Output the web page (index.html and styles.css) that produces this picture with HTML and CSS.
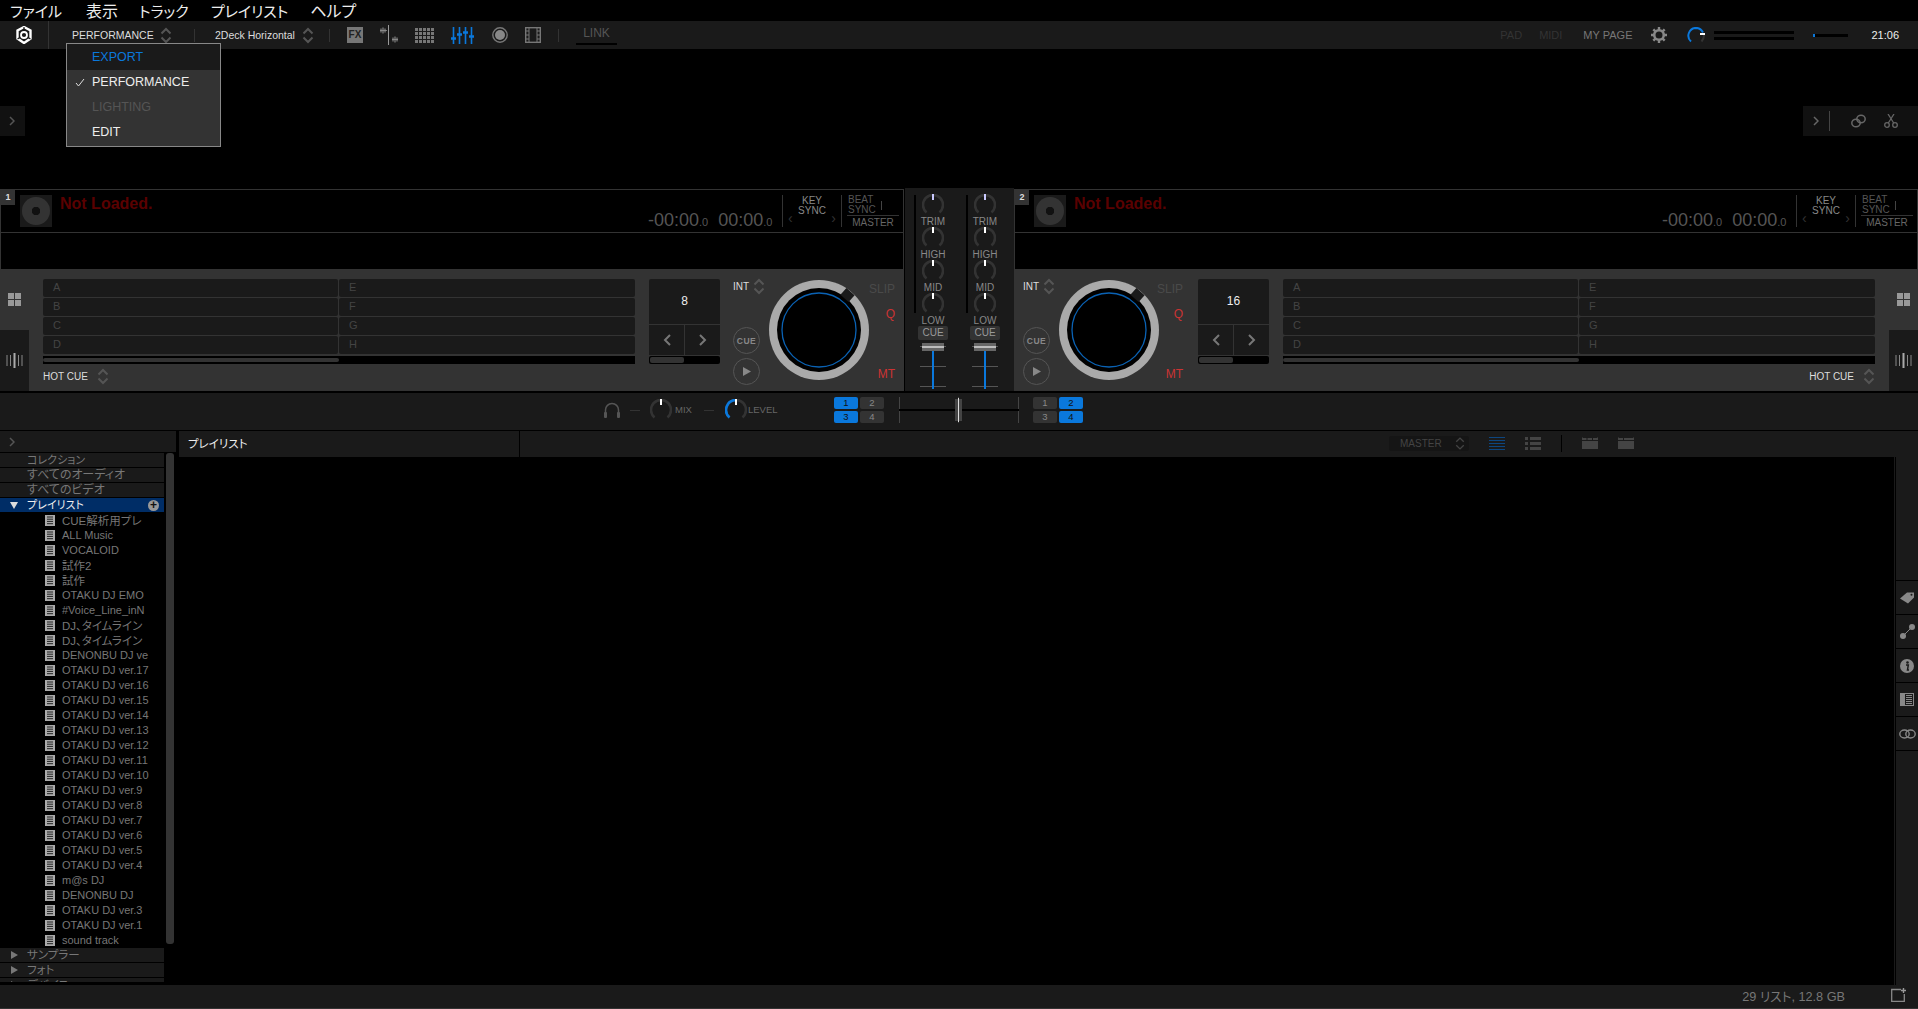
FILE: index.html
```html
<!DOCTYPE html>
<html lang="ja">
<head>
<meta charset="utf-8">
<title>rekordbox</title>
<link rel="stylesheet" href="styles.css">
</head>
<body>
<svg class="defs" width="0" height="0">
  <symbol id="updown" viewBox="0 0 12 17"><path d="M1.5 6.5 6 2l4.500 4.500M1.500 10.500 6 15l4.500-4.500" fill="none" stroke="#555" stroke-width="2"/></symbol>
  <symbol id="knob" viewBox="0 0 22 22"><path d="M4.500 18.500A10 10 0 1 1 17.500 18.500" fill="none" stroke="#333" stroke-width="2.600"/><rect x="10" y="0" width="2" height="6" fill="#fff"/></symbol>
  <symbol id="trim" viewBox="0 0 22 22"><path d="M4.500 18.500A10 10 0 1 1 17.500 18.500" fill="none" stroke="#333" stroke-width="2.600"/><rect x="10" y="0" width="2" height="6" fill="#c9c9ff"/></symbol>
  <symbol id="jog" viewBox="0 0 100 100">
    <circle cx="50" cy="50" r="50" fill="#aaa"/><circle cx="50" cy="50" r="42" fill="#000"/><circle cx="50" cy="50" r="37" fill="none" stroke="#0a62b4" stroke-width="1.300"/>
    <rect x="73" y="10.500" width="11" height="9" fill="#1a1a1a" transform="rotate(42 78.500 15)"/>
  </symbol>
  <symbol id="fader" viewBox="0 0 30 48">
    <rect x="2" y="3" width="26" height="1" fill="#555"/><rect x="2" y="23" width="26" height="1" fill="#555"/><rect x="2" y="43" width="26" height="1" fill="#555"/>
    <rect x="14" y="6" width="2" height="40" fill="#0a78dc"/>
    <rect x="4" y="0" width="22" height="8" fill="#666"/><rect x="4" y="3" width="22" height="2" fill="#bbb"/>
  </symbol>
  <symbol id="plist" viewBox="0 0 10 11"><rect width="10" height="11" fill="#aaa"/><path d="M2 2h6M2 4.200h6M2 6.400h6M2 8.700h6" stroke="#222" stroke-width="1"/></symbol>
  <symbol id="grid4" viewBox="0 0 13 13"><path d="M0 0h6v6H0zM7 0h6v6H7zM0 7h6v6H0zM7 7h6v6H7z" fill="#999"/></symbol>
  <symbol id="wavetab" viewBox="0 0 17 15"><path d="M1 2v11M4.500 2v11M12.500 2v11M16 2v11" stroke="#888" stroke-width="1"/><path d="M8.500 0v15" stroke="#aaa" stroke-width="2"/></symbol>
</svg>

<nav class="menubar">
  <span class="menu-item">ファイル</span><span class="menu-item menu-kanji">表示</span><span class="menu-item">トラック</span><span class="menu-item">プレイリスト</span><span class="menu-item menu-kanji">ヘルプ</span>
</nav>

<header class="toolbar">
  <div class="logo-cell">
    <svg width="16" height="18" viewBox="0 0 16 18"><path d="M8 1 14.500 4.500v8L8 17 1.500 12.500v-8z" fill="none" stroke="#fff" stroke-width="2.400"/><circle cx="8" cy="9" r="3" fill="none" stroke="#fff" stroke-width="1.800"/><path d="M8 1v3M1.500 13l2.500-1.500M14.500 13 12 11.500" stroke="#1a1a1a" stroke-width="1.200"/></svg>
  </div>
  <span class="tb-label tb-mode">PERFORMANCE</span>
  <svg class="tb-chev tb-chev-a" width="12" height="17"><use href="#updown"/></svg>
  <i class="tb-sep tb-sep-a"></i>
  <span class="tb-label tb-layout">2Deck Horizontal</span>
  <svg class="tb-chev tb-chev-b" width="12" height="17"><use href="#updown"/></svg>
  <i class="tb-sep tb-sep-b"></i>
  <span class="fx-icon">FX</span>
  <svg class="ic-wave" width="19" height="20" viewBox="0 0 19 20"><path d="M9.500 0v20" stroke="#999"/><path d="M1 5.500h7M13 14.500h6" stroke="#777"/><path d="M2 3.500v4M4 2.500v6M6 3.500v4M14 12.500v4M16 11.500v6M18 12.500v4" stroke="#999"/></svg>
  <svg class="ic-pads" width="19" height="15" viewBox="0 0 19 15"><path d="M0 0h3v3H0zM4 0h3v3H4zM8 0h3v3H8zM12 0h3v3h-3zM16 0h3v3h-3zM0 4h3v3H0zM4 4h3v3H4zM8 4h3v3H8zM12 4h3v3h-3zM16 4h3v3h-3zM0 8h3v3H0zM4 8h3v3H4zM8 8h3v3H8zM12 8h3v3h-3zM16 8h3v3h-3zM0 12h3v3H0zM4 12h3v3H4zM8 12h3v3H8zM12 12h3v3h-3zM16 12h3v3h-3z" fill="#777"/></svg>
  <svg class="ic-mix" width="23" height="17" viewBox="0 0 23 17"><g stroke="#0a78dc"><path d="M2.500 0v17M8.500 0v17M14.500 0v17M20.500 0v17" stroke-width="1.600"/><path d="M0 11.500h5M6 7.500h5M12 5.500h5M18 9.500h5" stroke-width="2.400"/></g></svg>
  <svg class="ic-rec" width="16" height="16" viewBox="0 0 16 16"><circle cx="8" cy="8" r="7.200" fill="none" stroke="#777" stroke-width="1.400"/><circle cx="8" cy="8" r="5" fill="#888"/></svg>
  <svg class="ic-film" width="16" height="16" viewBox="0 0 16 16"><rect x=".7" y=".7" width="14.600" height="14.600" fill="none" stroke="#777" stroke-width="1.400"/><path d="M4 0v16M12 0v16M0 4h4M0 8h4M0 12h4M12 4h4M12 8h4M12 12h4" stroke="#777"/></svg>
  <i class="tb-sep tb-sep-c"></i>
  <span class="tb-link">LINK</span>
  <div class="tb-right">
    <span class="tb-dim tb-pad">PAD</span>
    <span class="tb-dim tb-midi">MIDI</span>
    <span class="tb-mypage">MY PAGE</span>
    <svg class="ic-gear" width="16" height="16" viewBox="0 0 16 16"><circle cx="8" cy="8" r="4.800" fill="none" stroke="#888" stroke-width="2.600"/><path d="M8 0v3M8 13v3M0 8h3M13 8h3M2.300 2.300l2.100 2.100M11.600 11.600l2.100 2.100M13.700 2.300l-2.100 2.100M4.400 11.600l-2.100 2.100" stroke="#888" stroke-width="2.400"/></svg>
    <svg class="ic-vol" width="18" height="16" viewBox="0 0 18 16"><path d="M4 14.500A7.800 7.800 0 0 1 9 .9c3 0 5.500 1.800 7 4.600" fill="none" stroke="#0a78dc" stroke-width="2"/><path d="M17 8c0 2.500-.8 4.500-2.500 6.500" fill="none" stroke="#333" stroke-width="2"/><rect x="13" y="6" width="5" height="2" fill="#fff"/></svg>
    <div class="meter"><i></i><i></i></div>
    <div class="cpu"><i></i></div>
    <span class="clock">21:06</span>
  </div>
</header>

<ul class="mode-menu">
  <li class="mm-row mm-active">EXPORT</li>
  <li class="mm-row mm-checked"><svg class="mm-check" width="10" height="9" viewBox="0 0 10 9"><path d="M1 5l2.500 3L9 1" fill="none" stroke="#ddd" stroke-width="1"/></svg>PERFORMANCE</li>
  <li class="mm-row mm-off">LIGHTING</li>
  <li class="mm-row">EDIT</li>
</ul>

<section class="topzone">
  <div class="side-tab"><svg width="6" height="10" viewBox="0 0 6 10"><path d="M1 1l4 4-4 4" fill="none" stroke="#555" stroke-width="1.500"/></svg></div>
  <div class="side-tools">
    <svg width="6" height="10" viewBox="0 0 6 10"><path d="M1 1l4 4-4 4" fill="none" stroke="#666" stroke-width="1.500"/></svg>
    <i class="st-sep"></i>
    <svg class="st-link" width="15" height="14" viewBox="0 0 15 14"><g fill="none" stroke="#666" stroke-width="1.500"><ellipse cx="5" cy="9" rx="4.200" ry="3.800"/><ellipse cx="10" cy="5" rx="4.200" ry="3.800"/></g></svg>
    <svg class="st-cut" width="14" height="14" viewBox="0 0 14 14"><g fill="none" stroke="#666" stroke-width="1.300"><circle cx="3" cy="11" r="2.300"/><circle cx="11" cy="11" r="2.300"/><path d="M4.300 9 10 0M9.700 9 4 0"/></g></svg>
  </div>
</section>

<main class="decks">
  <section class="deck">
    <div class="info">
      <span class="badge">1</span>
      <span class="jacket"><i></i></span>
      <span class="title">Not Loaded.</span>
      <span class="times"><b>-00:00<small>.0</small></b><b>00:00<small>.0</small></b></span>
      <div class="keysync"><span class="chev-l">‹</span><span class="key-text">KEY<br>SYNC</span><span class="chev-r">›</span></div>
      <div class="beatsync"><div class="bs-top"><span>BEAT<br>SYNC</span><i></i></div><div class="bs-master">MASTER</div></div>
    </div>
    <div class="wave"></div>
    <div class="panel">
      <div class="tabs"><div class="tab-a"><svg width="13" height="13"><use href="#grid4"/></svg></div><div class="tab-b"><svg width="17" height="15"><use href="#wavetab"/></svg></div></div>
      <div class="pads-col">
        <div class="pads"><span>A</span><span>E</span><span>B</span><span>F</span><span>C</span><span>G</span><span>D</span><span>H</span></div>
        <div class="pad-scroll"><i></i></div>
        <div class="pad-mode"><span>HOT CUE</span><svg width="12" height="17"><use href="#updown"/></svg></div>
      </div>
      <div class="loop">
        <div class="loop-num">8</div>
        <div class="loop-arrows"><span><svg width="8" height="12" viewBox="0 0 8 12"><path d="M7 1 2 6l5 5" fill="none" stroke="#777" stroke-width="2"/></svg></span><span><svg width="8" height="12" viewBox="0 0 8 12"><path d="M1 1l5 5-5 5" fill="none" stroke="#777" stroke-width="2"/></svg></span></div>
        <div class="loop-scroll"><i></i></div>
      </div>
      <div class="transport">
        <div class="int"><span>INT</span><svg width="12" height="17"><use href="#updown"/></svg></div>
        <div class="round cue">CUE</div>
        <div class="round play"><svg width="8" height="9" viewBox="0 0 8 9"><path d="M0 0l8 4.500L0 9z" fill="#888"/></svg></div>
      </div>
      <svg class="jog" width="100" height="100"><use href="#jog"/></svg>
      <div class="flags"><span class="slip">SLIP</span><span class="q">Q</span><span class="mt">MT</span></div>
    </div>
  </section>

  <section class="mixer">
    <div class="channel">
      <i class="ch-meter"></i>
      <div class="ch-col">
        <svg width="22" height="22"><use href="#trim"/></svg><span>TRIM</span>
        <svg width="22" height="22"><use href="#knob"/></svg><span>HIGH</span>
        <svg width="22" height="22"><use href="#knob"/></svg><span>MID</span>
        <svg width="22" height="22"><use href="#knob"/></svg><span>LOW</span>
        <div class="ch-cue">CUE</div>
        <svg class="ch-fader" width="30" height="48"><use href="#fader"/></svg>
      </div>
    </div>
    <div class="channel">
      <i class="ch-meter"></i>
      <div class="ch-col">
        <svg width="22" height="22"><use href="#trim"/></svg><span>TRIM</span>
        <svg width="22" height="22"><use href="#knob"/></svg><span>HIGH</span>
        <svg width="22" height="22"><use href="#knob"/></svg><span>MID</span>
        <svg width="22" height="22"><use href="#knob"/></svg><span>LOW</span>
        <div class="ch-cue">CUE</div>
        <svg class="ch-fader" width="30" height="48"><use href="#fader"/></svg>
      </div>
    </div>
  </section>

  <section class="deck">
    <div class="info">
      <span class="badge">2</span>
      <span class="jacket"><i></i></span>
      <span class="title">Not Loaded.</span>
      <span class="times"><b>-00:00<small>.0</small></b><b>00:00<small>.0</small></b></span>
      <div class="keysync"><span class="chev-l">‹</span><span class="key-text">KEY<br>SYNC</span><span class="chev-r">›</span></div>
      <div class="beatsync"><div class="bs-top"><span>BEAT<br>SYNC</span><i></i></div><div class="bs-master">MASTER</div></div>
    </div>
    <div class="wave"></div>
    <div class="panel panel-r">
      <div class="transport">
        <div class="int"><span>INT</span><svg width="12" height="17"><use href="#updown"/></svg></div>
        <div class="round cue">CUE</div>
        <div class="round play"><svg width="8" height="9" viewBox="0 0 8 9"><path d="M0 0l8 4.500L0 9z" fill="#888"/></svg></div>
      </div>
      <svg class="jog" width="100" height="100"><use href="#jog"/></svg>
      <div class="flags"><span class="slip">SLIP</span><span class="q">Q</span><span class="mt">MT</span></div>
      <div class="loop">
        <div class="loop-num">16</div>
        <div class="loop-arrows"><span><svg width="8" height="12" viewBox="0 0 8 12"><path d="M7 1 2 6l5 5" fill="none" stroke="#777" stroke-width="2"/></svg></span><span><svg width="8" height="12" viewBox="0 0 8 12"><path d="M1 1l5 5-5 5" fill="none" stroke="#777" stroke-width="2"/></svg></span></div>
        <div class="loop-scroll"><i></i></div>
      </div>
      <div class="pads-col">
        <div class="pads"><span>A</span><span>E</span><span>B</span><span>F</span><span>C</span><span>G</span><span>D</span><span>H</span></div>
        <div class="pad-scroll"><i></i></div>
        <div class="pad-mode pad-mode-r"><span>HOT CUE</span><svg width="12" height="17"><use href="#updown"/></svg></div>
      </div>
      <div class="tabs"><div class="tab-a"><svg width="13" height="13"><use href="#grid4"/></svg></div><div class="tab-b"><svg width="17" height="15"><use href="#wavetab"/></svg></div></div>
    </div>
  </section>
</main>

<section class="strip">
  <svg class="phones" width="18" height="16" viewBox="0 0 18 16"><path d="M2.500 15V8a6.500 6.500 0 0 1 13 0v7" fill="none" stroke="#555" stroke-width="1.500"/><rect x="1" y="10" width="3" height="6" rx="1" fill="#555"/><rect x="14" y="10" width="3" height="6" rx="1" fill="#555"/></svg>
  <i class="dash dash-a"></i>
  <svg class="knob-mix" width="22" height="22"><use href="#knob"/></svg>
  <span class="strip-label lb-mix">MIX</span>
  <i class="dash dash-b"></i>
  <svg class="knob-level" width="22" height="22" viewBox="0 0 22 22"><path d="M4.500 18.500A10 10 0 1 1 17.500 18.500" fill="none" stroke="#333" stroke-width="2.600"/><path d="M4.500 18.500A10 10 0 0 1 11 1" fill="none" stroke="#0a78dc" stroke-width="2.600"/><rect x="10" y="0" width="2" height="6" fill="#fff"/></svg>
  <span class="strip-label lb-level">LEVEL</span>
  <div class="fxgrid fxgrid-l"><span class="on">1</span><span>2</span><span class="on">3</span><span>4</span></div>
  <svg class="xfader" width="120" height="26" viewBox="0 0 120 26"><path d="M.5 0v26M59.500 0v26M119.500 0v26" stroke="#444"/><rect y="12" width="120" height="2" fill="#000"/><rect x="56" y="2" width="7" height="22" fill="#444"/><rect x="59" y="1" width="1" height="24" fill="#ddd"/></svg>
  <div class="fxgrid fxgrid-r"><span>1</span><span class="on">2</span><span>3</span><span class="on">4</span></div>
</section>

<section class="browser">
  <aside class="sidebar">
    <div class="side-head"><svg width="6" height="10" viewBox="0 0 6 10"><path d="M1 1l4 4-4 4" fill="none" stroke="#555" stroke-width="1.500"/></svg></div>
    <div class="tree">
      <div class="node">コレクション</div>
      <div class="node node-kana">すべてのオーディオ</div>
      <div class="node node-kana">すべてのビデオ</div>
      <div class="node node-sel"><i class="tri-d"></i>プレイリスト<span class="plus">+</span></div>
      <div class="item item-jp"><svg width="10" height="11"><use href="#plist"/></svg>CUE解析用プレ</div>
      <div class="item"><svg width="10" height="11"><use href="#plist"/></svg>ALL Music</div>
      <div class="item"><svg width="10" height="11"><use href="#plist"/></svg>VOCALOID</div>
      <div class="item item-jp"><svg width="10" height="11"><use href="#plist"/></svg>試作2</div>
      <div class="item item-jp"><svg width="10" height="11"><use href="#plist"/></svg>試作</div>
      <div class="item"><svg width="10" height="11"><use href="#plist"/></svg>OTAKU DJ EMO</div>
      <div class="item"><svg width="10" height="11"><use href="#plist"/></svg>#Voice_Line_inN</div>
      <div class="item item-jp"><svg width="10" height="11"><use href="#plist"/></svg>DJ、タイムライン</div>
      <div class="item item-jp"><svg width="10" height="11"><use href="#plist"/></svg>DJ、タイムライン</div>
      <div class="item"><svg width="10" height="11"><use href="#plist"/></svg>DENONBU DJ ve</div>
      <div class="item"><svg width="10" height="11"><use href="#plist"/></svg>OTAKU DJ ver.17</div>
      <div class="item"><svg width="10" height="11"><use href="#plist"/></svg>OTAKU DJ ver.16</div>
      <div class="item"><svg width="10" height="11"><use href="#plist"/></svg>OTAKU DJ ver.15</div>
      <div class="item"><svg width="10" height="11"><use href="#plist"/></svg>OTAKU DJ ver.14</div>
      <div class="item"><svg width="10" height="11"><use href="#plist"/></svg>OTAKU DJ ver.13</div>
      <div class="item"><svg width="10" height="11"><use href="#plist"/></svg>OTAKU DJ ver.12</div>
      <div class="item"><svg width="10" height="11"><use href="#plist"/></svg>OTAKU DJ ver.11</div>
      <div class="item"><svg width="10" height="11"><use href="#plist"/></svg>OTAKU DJ ver.10</div>
      <div class="item"><svg width="10" height="11"><use href="#plist"/></svg>OTAKU DJ ver.9</div>
      <div class="item"><svg width="10" height="11"><use href="#plist"/></svg>OTAKU DJ ver.8</div>
      <div class="item"><svg width="10" height="11"><use href="#plist"/></svg>OTAKU DJ ver.7</div>
      <div class="item"><svg width="10" height="11"><use href="#plist"/></svg>OTAKU DJ ver.6</div>
      <div class="item"><svg width="10" height="11"><use href="#plist"/></svg>OTAKU DJ ver.5</div>
      <div class="item"><svg width="10" height="11"><use href="#plist"/></svg>OTAKU DJ ver.4</div>
      <div class="item"><svg width="10" height="11"><use href="#plist"/></svg>m@s DJ</div>
      <div class="item"><svg width="10" height="11"><use href="#plist"/></svg>DENONBU DJ</div>
      <div class="item"><svg width="10" height="11"><use href="#plist"/></svg>OTAKU DJ ver.3</div>
      <div class="item"><svg width="10" height="11"><use href="#plist"/></svg>OTAKU DJ ver.1</div>
      <div class="item"><svg width="10" height="11"><use href="#plist"/></svg>sound track</div>
      <div class="node node-kana2"><i class="tri-r"></i>サンプラー</div>
      <div class="node node-kana2"><i class="tri-r"></i>フォト</div>
      <div class="node node-kana2"><i class="tri-r"></i>デバイス</div>
      <i class="tree-scroll"></i>
    </div>
  </aside>
  <div class="content">
    <div class="list-head">
      <div class="list-title">プレイリスト</div>
      <div class="master-box"><span>MASTER</span><svg width="10" height="15" viewBox="0 0 12 17"><path d="M1.500 6.500 6 2l4.500 4.500M1.500 10.500 6 15l4.500-4.500" fill="none" stroke="#444" stroke-width="1.600"/></svg></div>
      <svg class="lh-a" width="16" height="13" viewBox="0 0 16 13"><path d="M0 .5h16M0 3.500h16M0 6.500h16M0 9.500h16M0 12.500h16" stroke="#0d4680"/></svg>
      <svg class="lh-b" width="16" height="13" viewBox="0 0 16 13"><path d="M0 0h3v3H0zM5 0h11v3H5zM0 5h3v3H0zM5 5h11v3H5zM0 10h3v3H0zM5 10h11v3H5z" fill="#444"/></svg>
      <i class="lh-sep"></i>
      <svg class="lh-c" width="16" height="12" viewBox="0 0 16 12"><rect width="16" height="12" fill="#444"/><path d="M.5 .5h15M5 .5v3M10.500 .5v3M0 3.500h16" stroke="#1a1a1a"/></svg>
      <svg class="lh-d" width="16" height="12" viewBox="0 0 16 12"><rect width="16" height="12" fill="#444"/><path d="M.5 .5h15M5.500 .5v3M0 3.500h16" stroke="#1a1a1a"/></svg>
    </div>
    <div class="list-body">
      <div class="list-empty"></div>
      <div class="rail">
        <div class="rail-top"></div>
        <div class="rail-cell"><svg width="14" height="12" viewBox="0 0 14 12"><path d="M0 6.500 7 .5h7v5l-6 6z" fill="#888"/><circle cx="11.500" cy="2.800" r="1" fill="#1a1a1a"/></svg></div>
        <div class="rail-cell"><svg width="15" height="15" viewBox="0 0 15 15"><circle cx="3" cy="12" r="3" fill="#888"/><circle cx="12" cy="3" r="3" fill="#888"/><path d="M3 12 12 3" stroke="#888"/></svg></div>
        <div class="rail-cell"><svg width="14" height="14" viewBox="0 0 14 14"><circle cx="7" cy="7" r="7" fill="#888"/><circle cx="7.500" cy="3.500" r="1.300" fill="#1a1a1a"/><path d="M6 6h2.300l-.8 5H9" fill="none" stroke="#1a1a1a" stroke-width="1.500"/></svg></div>
        <div class="rail-cell"><svg width="14" height="13" viewBox="0 0 14 13"><rect width="14" height="13" fill="#888"/><rect x="5" y="1" width="8" height="11" fill="#1a1a1a"/><path d="M6 2.500h6M6 4.500h6M6 6.500h6M6 8.500h6M6 10.500h6" stroke="#888"/></svg></div>
        <div class="rail-cell"><svg width="17" height="10" viewBox="0 0 17 10"><g fill="none" stroke="#888" stroke-width="1.400"><ellipse cx="5.500" cy="5" rx="4.700" ry="4"/><ellipse cx="11.500" cy="5" rx="4.700" ry="4"/></g></svg></div>
        <div class="rail-end"></div>
      </div>
    </div>
  </div>
</section>

<footer class="status">
  <span class="status-text">29 リスト, 12.8 GB</span>
  <svg width="15" height="14" viewBox="0 0 15 14"><path d="M10 1.500H.7v11.800h12.600V6" fill="none" stroke="#888" stroke-width="1.300"/><path d="M12.500 0v5M10 2.500h5" stroke="#999" stroke-width="1.400"/></svg>
</footer>
</body>
</html>
```

FILE: styles.css
```css
* { box-sizing: border-box; }
html, body { margin: 0; padding: 0; }
body {
  width: 1918px; height: 1009px; overflow: hidden; background: #000; color: #888;
  font-family: "Liberation Sans", "Noto Sans CJK JP", sans-serif; font-size: 11px; position: relative;
  font-feature-settings: "palt";
}
i { display: block; font-style: normal; }
svg { display: block; flex: none; }
.defs { position: absolute; }

/* menu */
.menubar { height: 21px; display: flex; align-items: center; padding-left: 10px; color: #eee; font-size: 15px; font-family: "Noto Sans CJK JP", sans-serif; line-height: 21px; }
.menu-item { margin-right: 22px; }
.menu-item:first-child { margin-right: 24px; }
.menu-kanji { font-size: 16px; margin-right: 21px; }

/* toolbar */
.toolbar { height: 28px; background: #1a1a1a; display: flex; align-items: center; font-size: 10.5px; }
.logo-cell { width: 49px; height: 28px; border-right: 1px solid #333; display: flex; align-items: center; justify-content: center; }
.tb-label { color: #ddd; white-space: nowrap; }
.tb-mode { margin-left: 23px; width: 81px; }
.tb-chev-a { margin-left: 7px; }
.tb-sep { width: 1px; height: 13px; background: #333; }
.tb-sep-a { margin-left: 22px; }
.tb-layout { margin-left: 20px; width: 79px; }
.tb-chev-b { margin-left: 8px; }
.tb-sep-b { margin-left: 15px; }
.fx-icon { margin-left: 17px; width: 16px; height: 16px; background: #777; color: #222; font-weight: bold; font-size: 10px; line-height: 16px; text-align: center; }
.ic-wave { margin-left: 16px; }
.ic-pads { margin-left: 17px; }
.ic-mix { margin-left: 17px; }
.ic-rec { margin-left: 18px; }
.ic-film { margin-left: 17px; }
.tb-sep-c { margin-left: 17px; }
.tb-link { margin-left: 17px; width: 41px; height: 20px; line-height: 16px; font-size: 12px; text-align: center; color: #555; border-bottom: 2px solid #000; margin-top: 0; }
.tb-right { margin-left: auto; display: flex; align-items: center; }
.tb-dim { color: #333; }
.tb-pad { font-size: 11px; }
.tb-midi { font-size: 11px; margin-left: 17px; }
.tb-mypage { margin-left: 21px; color: #777; font-size: 11px; }
.ic-gear { margin-left: 19px; }
.ic-vol { margin-left: 20px; }
.meter { margin-left: 9px; width: 80px; }
.meter i { height: 3px; background: #000; }
.meter i + i { margin-top: 3px; }
.cpu { margin-left: 19px; width: 35px; height: 3px; background: #000; }
.cpu i { width: 2px; height: 3px; background: #0a78dc; }
.clock { margin-left: 23px; margin-right: 19px; color: #eee; font-size: 11px; }

/* mode dropdown */
.mode-menu { position: absolute; left: 66px; top: 43px; width: 155px; height: 104px; margin: 0; padding: 0; list-style: none; background: #333; border: 1px solid #888; font-size: 12.500px; }
.mm-row { height: 25px; line-height: 25px; padding-left: 25px; color: #eee; position: relative; }
.mm-active { height: 26px; line-height: 27px; background: #1a1a1a; color: #0a78dc; }
.mm-checked { line-height: 24px; }
.mm-off { color: #555; }
.mm-check { position: absolute; left: 8px; top: 8px; }

/* top zone */
.topzone { height: 140px; padding-top: 57px; display: flex; justify-content: space-between; align-items: flex-start; }
.side-tab { width: 25px; height: 30px; background: #111; display: flex; align-items: center; padding-left: 9px; }
.side-tools { width: 115px; height: 30px; background: #111; display: flex; align-items: center; padding-left: 10px; }
.st-sep { width: 1px; height: 20px; background: #444; margin-left: 10px; }
.st-link { margin-left: 21px; }
.st-cut { margin-left: 18px; }

/* decks */
.decks { display: flex; height: 202px; }
.deck { width: 904px; flex: none; }
.info { height: 44px; border: 1px solid #333; display: flex; align-items: flex-start; }
.badge { width: 14px; height: 15px; background: #333; color: #ddd; font-weight: bold; font-size: 9px; line-height: 15px; text-align: center; }
.jacket { width: 32px; height: 32px; margin: 5px 0 0 5px; background: #1a1a1a; display: flex; align-items: center; justify-content: center; }
.jacket i { width: 28px; height: 28px; border-radius: 50%; background: radial-gradient(circle, #111 0 4px, #333 4.500px); }
.title { margin: 3px 0 0 8px; color: #5a0000; font-weight: bold; font-size: 16px; line-height: 22px; width: 588px; white-space: nowrap; }
.times { width: 134px; margin-top: 19px; display: flex; gap: 10px; color: #555; font-size: 18px; line-height: 22px; }
.times b { font-weight: normal; }
.times small { font-size: 11px; }
.keysync { width: 60px; height: 32px; margin-top: 5px; border-left: 1px solid #333; border-right: 1px solid #333; position: relative; text-align: center; font-size: 10px; line-height: 10px; color: #888; }
.key-text { display: block; padding-top: 1px; }
.chev-l, .chev-r { position: absolute; top: 18px; color: #333; font-size: 14px; }
.chev-l { left: 5px; }
.chev-r { right: 5px; }
.beatsync { width: 52px; margin: 5px 0 0 5px; font-size: 10px; line-height: 10px; color: #555; }
.bs-top { display: flex; align-items: center; height: 21px; padding-left: 1px; border-bottom: 1px solid #333; }
.bs-top i { width: 1px; height: 9px; background: #444; margin-left: 5px; }
.bs-master { text-align: center; padding-top: 2px; color: #666; }
.wave { height: 36px; border-left: 1px solid #333; border-right: 1px solid #333; }

.panel { height: 122px; background: #333; display: flex; align-items: flex-start; }
.tabs { width: 29px; height: 122px; flex: none; }
.panel-r .tabs { margin-left: 14px; }
.tab-a { height: 61px; display: flex; align-items: center; justify-content: center; }
.tab-b { height: 61px; background: #1a1a1a; display: flex; align-items: center; justify-content: center; padding-bottom: 1px; }
.pads-col { width: 592px; margin: 10px 0 0 14px; flex: none; }
.pads { display: grid; grid-template-columns: 295px 296px; grid-auto-rows: 18px; gap: 1px; }
.pads span { background: #1a1a1a; border-radius: 2px; color: #444; font-size: 11px; line-height: 17px; padding-left: 10px; }
.pad-scroll { height: 8px; background: #000; margin-top: 2px; padding-top: 2px; }
.pad-scroll i { width: 296px; height: 4px; background: #333; border-radius: 2px; }
.pad-mode { display: flex; align-items: center; height: 17px; margin-top: 4px; color: #ddd; font-size: 10px; }
.pad-mode svg { margin-left: 9px; }
.pad-mode-r { justify-content: flex-end; }
.loop { width: 71px; margin: 10px 0 0 14px; flex: none; }
.panel-r .loop { margin-left: 15px; }
.loop-num { height: 45px; background: #1a1a1a; border-radius: 2px 2px 0 0; color: #eee; font-size: 12px; line-height: 45px; text-align: center; }
.loop-arrows { height: 30px; margin-top: 1px; display: grid; grid-template-columns: 35px 35px; gap: 1px; }
.loop-arrows span { background: #1a1a1a; display: flex; align-items: center; justify-content: center; }
.loop-scroll { height: 8px; margin-top: 1px; background: #000; border-radius: 2px; padding: 1px; }
.loop-scroll i { width: 34px; height: 6px; background: #333; border-radius: 2px; }
.transport { width: 27px; margin: 10px 0 0 13px; flex: none; }
.int { display: flex; align-items: center; height: 17px; color: #ddd; font-size: 10px; white-space: nowrap; margin-top: -1px; }
.int svg { margin-left: 4px; }
.round { width: 27px; height: 27px; border: 1px solid #555; border-radius: 50%; display: flex; align-items: center; justify-content: center; }
.cue { margin-top: 32px; color: #888; font-weight: bold; font-size: 8.500px; letter-spacing: .5px; }
.play { margin-top: 4px; }
.jog { margin: 11px 0 0 9px; }
.flags { width: 26px; flex: none; display: flex; flex-direction: column; align-items: flex-end; margin-top: 13px; font-size: 12px; line-height: 14px; color: #c33; }
.slip { color: #4a4a4a; white-space: nowrap; }
.q { margin-top: 11px; }
.mt { margin-top: 46px; }
.panel-r .transport { margin-left: 9px; }
.panel-r .flags { width: 24px; }

/* mixer */
.mixer { width: 109px; flex: none; margin: -1px 0 0 1px; height: 203px; background: #1a1a1a; display: flex; padding-left: 2px; }
.channel { width: 52px; display: flex; align-items: flex-start; }
.ch-meter { width: 2px; height: 118px; background: #000; margin: 7px 0 0 7px; }
.ch-col { width: 30px; margin: 6px 0 0 2px; display: flex; flex-direction: column; align-items: center; }
.ch-col span { height: 11px; line-height: 11px; font-size: 10px; color: #888; }
.ch-cue { width: 30px; height: 14px; background: #333; border-radius: 2px; color: #999; font-size: 10px; line-height: 14px; text-align: center; }
.ch-fader { margin-top: 3px; }

/* strip */
.strip { height: 38px; margin-top: 2px; background: #1a1a1a; border-bottom: 1px solid #000; display: flex; align-items: center; padding-bottom: 3px; }
.phones { margin-left: 603px; }
.dash { width: 10px; height: 1px; background: #333; }
.dash-a { margin-left: 9px; }
.knob-mix { margin-left: 10px; }
.strip-label { font-size: 9.500px; color: #666; margin-bottom: 2px; }
.lb-mix { margin-left: 3px; width: 18px; }
.dash-b { margin-left: 11px; }
.knob-level { margin-left: 11px; }
.lb-level { margin-left: 1px; width: 30px; }
.fxgrid { display: grid; grid-template-columns: 24px 24px; grid-auto-rows: 12px; gap: 2px; }
.fxgrid span { background: #333; border-radius: 2px; color: #888; font-size: 9.500px; line-height: 12px; text-align: center; }
.fxgrid .on { background: #0a78dc; color: #111; }
.fxgrid-l { margin-left: 56px; }
.xfader { margin-left: 15px; }
.fxgrid-r { margin-left: 14px; }

/* browser */
.browser { height: 554px; display: flex; }
.sidebar { width: 179px; flex: none; }
.side-head { width: 176px; height: 21px; background: #1a1a1a; display: flex; align-items: center; padding-left: 9px; }
.tree { position: relative; height: 529px; margin-top: 1px; overflow: hidden; }
.node { width: 164px; height: 14px; margin-bottom: 1px; background: #1a1a1a; color: #777; font-size: 11px; line-height: 14px; padding-left: 27px; position: relative; white-space: nowrap; }
.node-kana { font-size: 12px; }
.node-kana2 { font-size: 11.500px; }
.node-sel { background: #002d66; color: #eee; }
.tri-d { position: absolute; left: 10px; top: 4px; width: 0; height: 0; border: 4px solid transparent; border-top: 7px solid #ddd; border-bottom: 0; }
.tri-r { position: absolute; left: 11px; top: 3px; width: 0; height: 0; border: 4px solid transparent; border-left: 7px solid #777; border-right: 0; }
.plus { position: absolute; left: 148px; top: 2px; width: 11px; height: 11px; border-radius: 50%; background: #999; color: #111; font-size: 12px; font-weight: bold; line-height: 10px; text-align: center; }
.item { width: 164px; height: 15px; display: flex; align-items: center; padding: 0 0 1px 45px; color: #777; font-size: 11px; white-space: nowrap; overflow: hidden; }
.item-jp { font-size: 11.500px; }
.item svg { margin-right: 7px; }
.tree-scroll { position: absolute; left: 166px; top: 0; width: 8px; height: 491px; background: #333; border-radius: 3px; }

.content { flex: 1; min-width: 0; display: flex; flex-direction: column; }
.list-head { height: 26px; flex: none; background: #1a1a1a; display: flex; align-items: center; padding-bottom: 2px; }
.list-title { width: 341px; height: 26px; align-self: flex-start; border-right: 1px solid #000; color: #eee; font-size: 11.500px; line-height: 26px; padding-left: 9px; }
.master-box { margin-left: 869px; width: 80px; height: 15px; background: #151515; border-radius: 2px; display: flex; align-items: center; color: #444; font-size: 10px; padding-left: 11px; }
.master-box span { width: 55px; }
.lh-a { margin-left: 20px; }
.lh-b { margin-left: 20px; }
.lh-sep { width: 1px; height: 17px; background: #000; margin-left: 20px; }
.lh-c { margin-left: 20px; }
.lh-d { margin-left: 20px; }
.list-body { flex: 1; display: flex; min-height: 0; }
.list-empty { flex: 1; border-right: 1px solid #1a1a1a; margin-right: 1px; }
.rail { width: 22px; flex: none; display: flex; flex-direction: column; }
.rail-top { height: 124px; background: #1a1a1a; border-bottom: 1px solid #000; }
.rail-cell { height: 34px; background: #1a1a1a; border-bottom: 1px solid #000; display: flex; align-items: center; justify-content: center; }
.rail-end { flex: 1; background: #1a1a1a; }

/* status */
.status { height: 24px; background: #1a1a1a; border-bottom: 1px solid #333; display: flex; align-items: center; justify-content: flex-end; padding: 0 12px 3px 0; color: #777; font-size: 12.700px; }
.status-text { margin-right: 46px; }
```
